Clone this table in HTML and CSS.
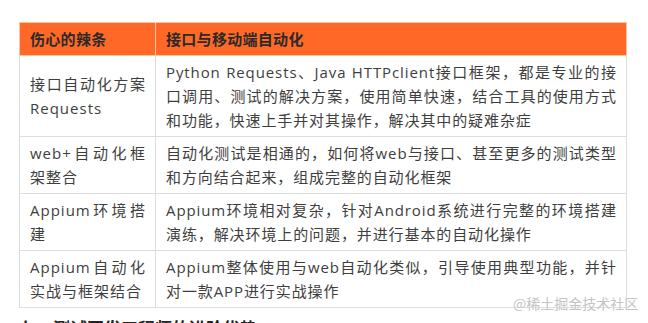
FILE: index.html
```html
<!DOCTYPE html>
<html lang="zh-CN">
<head>
<meta charset="utf-8">
<title>接口与移动端自动化</title>
<link rel="stylesheet" href="styles.css">
</head>
<body>
<div class="article">
  <table class="course">
    <thead>
      <tr>
        <th class="c1">伤心的辣条</th>
        <th class="c2">接口与移动端自动化</th>
      </tr>
    </thead>
    <tbody>
      <tr>
        <td class="c1">接口自动化方案 Requests</td>
        <td class="c2">Python Requests、Java HTTPclient接口框架，都是专业的接口调用、测试的解决方案，使用简单快速，结合工具的使用方式和功能，快速上手并对其操作，解决其中的疑难杂症</td>
      </tr>
      <tr>
        <td class="c1">web+自动化框架整合</td>
        <td class="c2">自动化测试是相通的，如何将web与接口、甚至更多的测试类型和方向结合起来，组成完整的自动化框架</td>
      </tr>
      <tr>
        <td class="c1">Appium环境搭建</td>
        <td class="c2">Appium环境相对复杂，针对Android系统进行完整的环境搭建演练，解决环境上的问题，并进行基本的自动化操作</td>
      </tr>
      <tr>
        <td class="c1">Appium自动化实战与框架结合</td>
        <td class="c2">Appium整体使用与web自动化类似，引导使用典型功能，并针对一款APP进行实战操作</td>
      </tr>
    </tbody>
  </table>
  <h3 class="next">七、测试开发工程师的进阶优势</h3>
  <div class="watermark">@稀土掘金技术社区</div>
</div>
</body>
</html>
```
FILE: styles.css
```css
html, body {
  margin: 0;
  padding: 0;
  background: #ffffff;
  overflow: hidden;
}
body {
  width: 648px;
  height: 323px;
  font-family: "Open Sans", "Noto Sans CJK SC", sans-serif;
}
.article {
  position: relative;
  padding: 22px 0 0 19px;
}
.course {
  border-collapse: collapse;
  width: 608px;
  table-layout: fixed;
  font-size: 15px;
  line-height: 24px;
  letter-spacing: 1px;
  color: #3e3e3e;
}
.course th,
.course td {
  padding: 4px 9px 4px 10px;
  border: 1px solid #dddddd;
  text-align: justify;
  text-justify: inter-character;
  vertical-align: middle;
}
.course th {
  background: #ff6827;
  color: #2a2a2a;
  font-weight: bold;
  border-color: #f6c6a6;
  letter-spacing: 0.3px;
}
.course .c1 {
  width: 116px;
}
.course td.c2 {
  letter-spacing: 0.9px;
}
.next {
  margin: 8px 0 0 0;
  font-size: 17px;
  line-height: 24px;
  font-weight: bold;
  color: #222;
  font-family: "Noto Sans CJK SC", sans-serif;
}
.watermark {
  position: absolute;
  left: 513px;
  top: 294px;
  font-family: "Noto Sans CJK SC", sans-serif;
  font-size: 14px;
  line-height: 18px;
  color: #c4c4c4;
  letter-spacing: 0;
  text-shadow: 0 0 1px #ffffff;
}
```
